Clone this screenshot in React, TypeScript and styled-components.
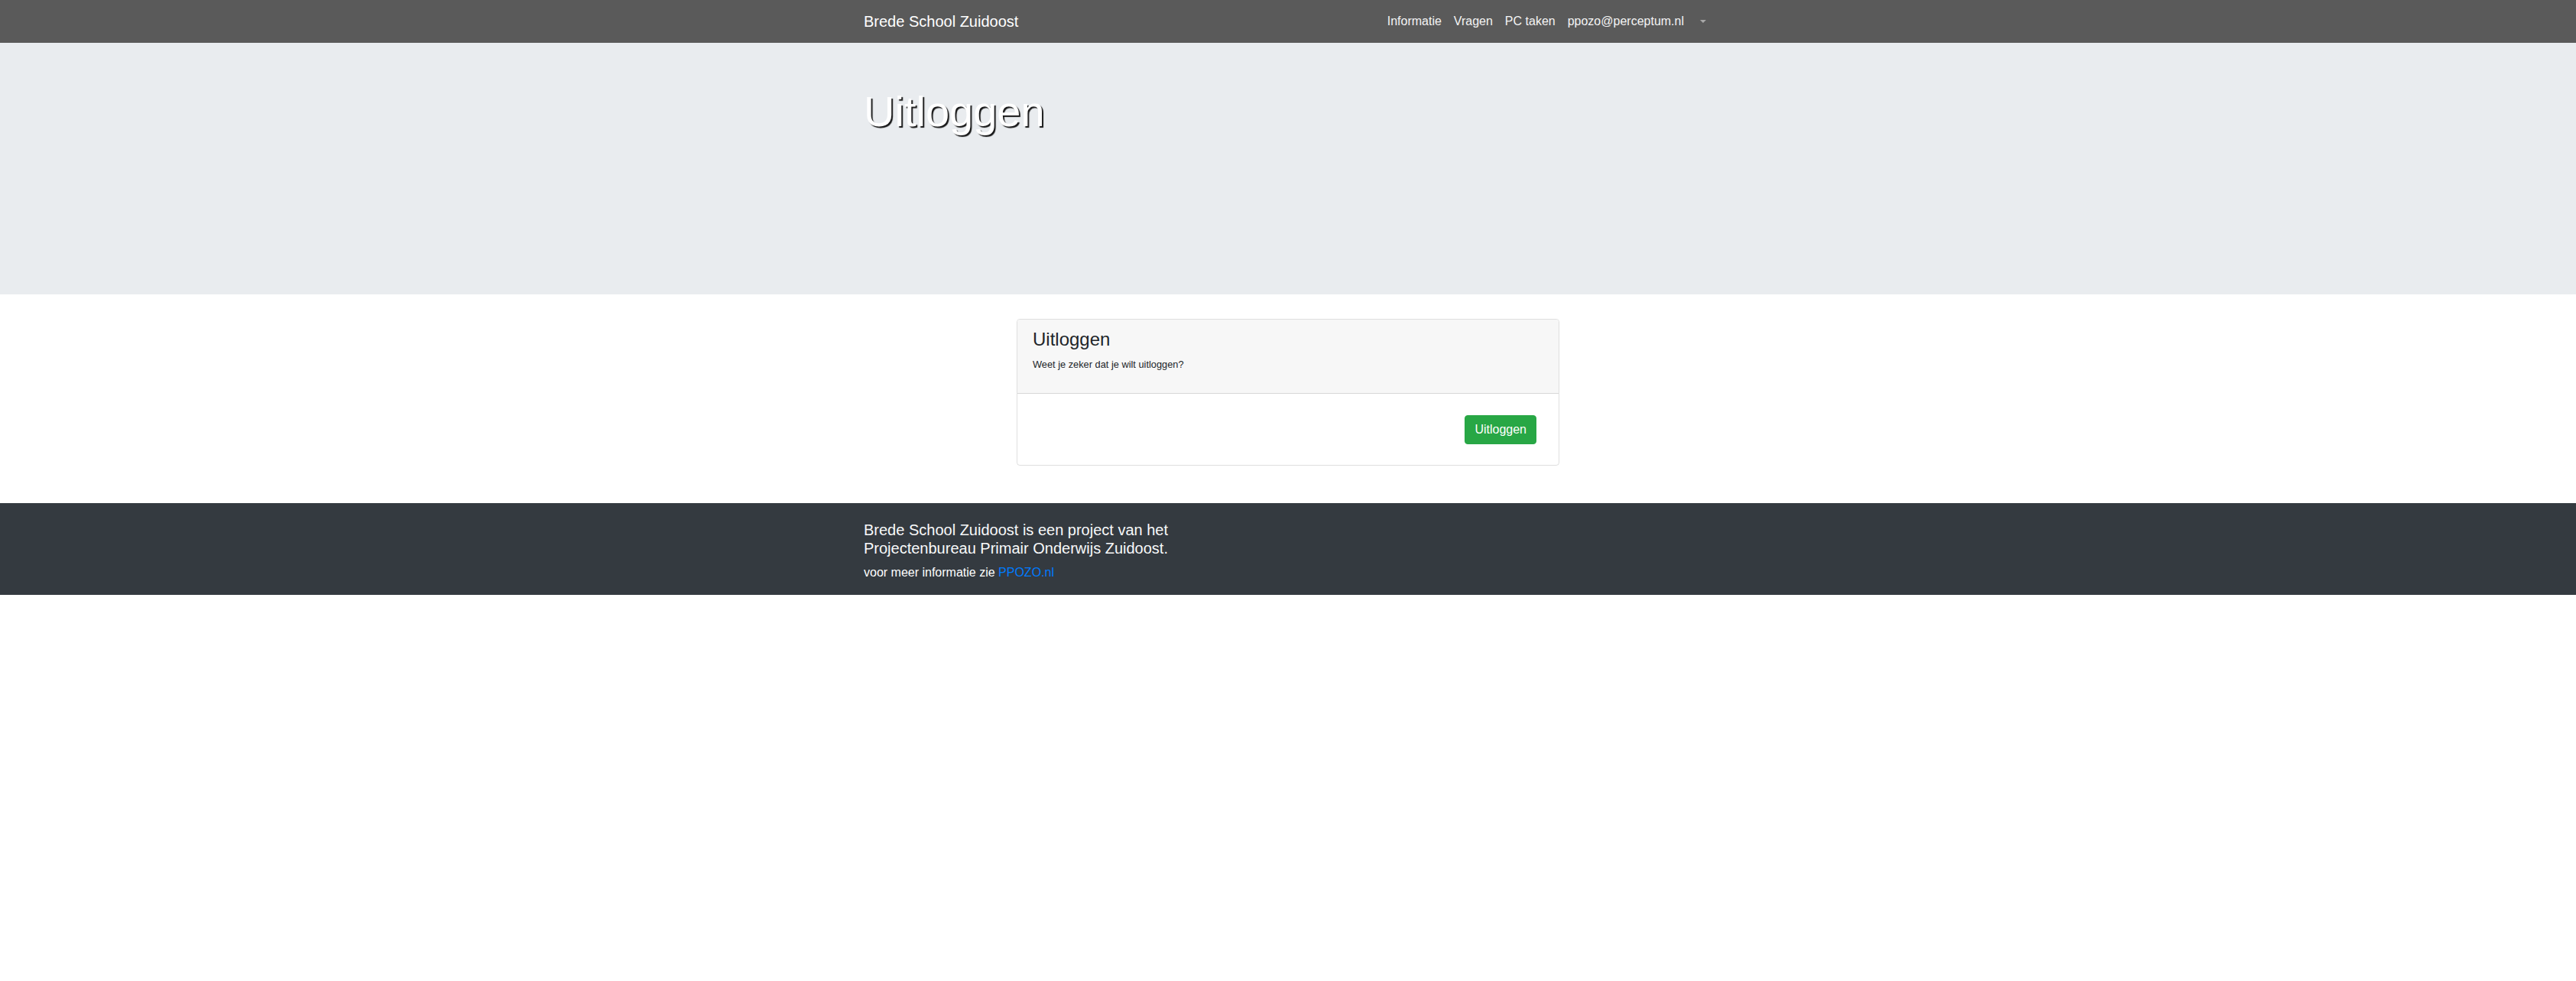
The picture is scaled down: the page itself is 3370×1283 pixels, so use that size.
import { createGlobalStyle, styled } from 'styled-components'

const GlobalStyle = createGlobalStyle`
  body {
    margin: 0;
    font-family: "Liberation Sans", Arial, Helvetica, sans-serif;
    font-size: 16px;
    line-height: 1.5;
    color: #212529;
    background: #fff;
  }
  * {
    box-sizing: border-box;
  }
`

const Container = styled.div`
  max-width: 1140px;
  margin: 0 auto;
  padding: 0 15px;
`

const NavBar = styled.nav`
  background: #5a5a5a;
  padding: 8px 0;
`

const NavInner = styled(Container)`
  display: flex;
  align-items: center;
  justify-content: space-between;
`

const Brand = styled.a`
  font-size: 20px;
  line-height: 30px;
  padding: 5px 0;
  color: #fff;
  text-decoration: none;
`

const NavList = styled.ul`
  display: flex;
  list-style: none;
  margin: 0;
  padding: 0;
`

const NavLink = styled.a`
  display: block;
  padding: 8px;
  font-size: 16px;
  line-height: 24px;
  color: #f4f4f4;
  text-decoration: none;
`

const DropToggle = styled.a`
  display: block;
  padding: 8px;
  line-height: 24px;

  &::after {
    content: '';
    display: inline-block;
    margin-left: 5px;
    vertical-align: 3px;
    border-top: 4.5px solid #a8a8a8;
    border-left: 4px solid transparent;
    border-right: 4px solid transparent;
  }
`

const Hero = styled.header`
  background: #e9ecef;
  height: 329px;
  padding-top: 56px;
`

const HeroTitle = styled.h1`
  margin: 0;
  font-size: 56px;
  font-weight: 300;
  line-height: 1.2;
  color: #fff;
  text-shadow: 2px 2px 1px rgba(0, 0, 0, 0.9);
`

const Main = styled.main`
  padding: 32px 0 49px;
`

const Card = styled.section`
  width: 710px;
  margin: 0 auto;
  border: 1px solid rgba(0, 0, 0, 0.125);
  border-radius: 4px;
  overflow: hidden;
`

const CardHeader = styled.div`
  background: #f7f7f7;
  padding: 12px 20px;
  border-bottom: 1px solid rgba(0, 0, 0, 0.125);
`

const CardTitle = styled.h4`
  margin: 0 0 8px;
  font-size: 24px;
  font-weight: 500;
  line-height: 1.2;
`

const CardText = styled.p`
  margin: 0 0 16px;
  font-size: 12.8px;
  line-height: 1.5;
`

const CardBody = styled.div`
  display: flex;
  justify-content: flex-end;
  padding: 28px 29px 27px;
`

const Button = styled.button`
  font-family: inherit;
  font-size: 16px;
  line-height: 24px;
  padding: 6px 12px;
  color: #fff;
  background: #28a745;
  border: 1px solid #28a745;
  border-radius: 4px;
  cursor: pointer;
`

const Footer = styled.footer`
  background: #343a40;
  padding: 23px 0 17px;
  color: #fff;
`

const FooterTitle = styled.h5`
  max-width: 445px;
  margin: 0 0 8px;
  font-size: 20px;
  font-weight: 400;
  line-height: 1.2;
  color: #f8f9fa;
`

const FooterText = styled.p`
  margin: 0;
  font-size: 16px;
  line-height: 24px;

  a {
    color: #007bff;
    text-decoration: none;
  }
`

const App = () => {
  return (
    <>
      <GlobalStyle />
      <NavBar>
        <NavInner>
          <Brand href="#">Brede School Zuidoost</Brand>
          <NavList>
            <li><NavLink href="#">Informatie</NavLink></li>
            <li><NavLink href="#">Vragen</NavLink></li>
            <li><NavLink href="#">PC taken</NavLink></li>
            <li><NavLink href="#">ppozo@perceptum.nl</NavLink></li>
            <li><DropToggle href="#" aria-label="menu" /></li>
          </NavList>
        </NavInner>
      </NavBar>
      <Hero>
        <Container>
          <HeroTitle>Uitloggen</HeroTitle>
        </Container>
      </Hero>
      <Main>
        <Card>
          <CardHeader>
            <CardTitle>Uitloggen</CardTitle>
            <CardText>Weet je zeker dat je wilt uitloggen?</CardText>
          </CardHeader>
          <CardBody>
            <Button type="button">Uitloggen</Button>
          </CardBody>
        </Card>
      </Main>
      <Footer>
        <Container>
          <FooterTitle>Brede School Zuidoost is een project van het Projectenbureau Primair Onderwijs Zuidoost.</FooterTitle>
          <FooterText>voor meer informatie zie <a href="#">PPOZO.nl</a></FooterText>
        </Container>
      </Footer>
    </>
  )
}

export default App
